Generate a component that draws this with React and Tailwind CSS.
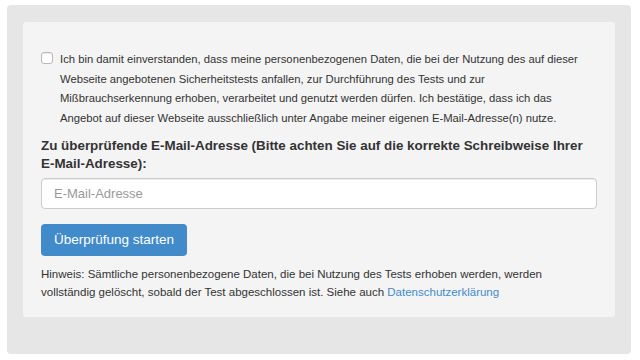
export default function App() {
  return (
    <div className="min-h-screen bg-white pt-[5px] pl-[7px] pr-[9px] font-['Liberation_Sans',Arial,sans-serif] text-[#333]">
      <div className="rounded-[4px] bg-[#e6e6e6] px-4 pt-[17px] pb-[37px]">
        <div className="rounded-[3px] bg-[#f4f4f4] px-[18px] pt-[28px] pb-4">
          <label className="flex items-start gap-[7px]">
            <input
              type="checkbox"
              className="mt-[2px] h-[12px] w-[12px] shrink-0 appearance-none rounded-[3px] border border-[#b9b9b9] bg-white shadow-[inset_0_1px_1px_rgba(0,0,0,0.08)]"
            />
            <span className="whitespace-nowrap text-[11.25px] leading-[19.6px]">
              Ich bin damit einverstanden, dass meine personenbezogenen Daten, die bei der Nutzung des auf dieser
              <br />
              Webseite angebotenen Sicherheitstests anfallen, zur Durchführung des Tests und zur
              <br />
              Mißbrauchserkennung erhoben, verarbeitet und genutzt werden dürfen. Ich bestätige, dass ich das
              <br />
              Angebot auf dieser Webseite ausschließlich unter Angabe meiner eigenen E-Mail-Adresse(n) nutze.
            </span>
          </label>

          <div className="mt-[9px] whitespace-nowrap text-[13.4px] font-bold leading-[18px]">
            Zu überprüfende E-Mail-Adresse (Bitte achten Sie auf die korrekte Schreibweise Ihrer
            <br />
            E-Mail-Adresse):
          </div>

          <input
            type="email"
            placeholder="E-Mail-Adresse"
            className="mt-[5px] block h-[31px] w-full rounded-[4px] border border-[#ccc] bg-white px-3 text-[13px] text-[#555] shadow-[inset_0_1px_1px_rgba(0,0,0,0.075)] outline-none placeholder:text-[#999]"
          />

          <button className="mt-[15px] h-[32px] w-[146px] rounded-[4px] bg-[#428bca] text-[13.5px] text-white">
            Überprüfung starten
          </button>

          <p className="mt-[10px] whitespace-nowrap text-[11.5px] leading-[17.5px]">
            Hinweis: Sämtliche personenbezogene Daten, die bei Nutzung des Tests erhoben werden, werden
            <br />
            vollständig gelöscht, sobald der Test abgeschlossen ist. Siehe auch{' '}
            <a href="#" className="text-[#428bca]">
              Datenschutzerklärung
            </a>
          </p>
        </div>
      </div>
    </div>
  );
}
